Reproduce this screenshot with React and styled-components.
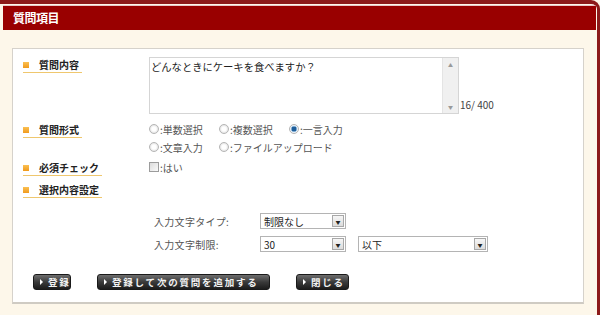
import React from "react";
import styled, { createGlobalStyle } from "styled-components";

const GlobalStyle = createGlobalStyle`
  html, body {
    margin: 0;
    padding: 0;
    background: #fdf7ea;
  }
  body {
    font-family: "Noto Sans CJK JP", "Liberation Sans", sans-serif;
    font-size: 10px;
    color: #333;
  }
`;

const typeOptions = [
  { key: "single", label: ":単数選択" },
  { key: "multi", label: ":複数選択" },
  { key: "line", label: ":一言入力", checked: true },
  { key: "text", label: ":文章入力" },
  { key: "file", label: ":ファイルアップロード" },
];

function App() {
  return (
    <>
      <GlobalStyle />
      <Frame>
        <Header>質問項目</Header>
        <Panel>
          <Row>
            <Label>質問内容</Label>
            <Field>
              <TextBox>
                <TextValue>どんなときにケーキを食べますか？</TextValue>
                <Scroll>
                  <Arrow>▲</Arrow>
                  <Arrow>▼</Arrow>
                </Scroll>
              </TextBox>
              <Counter>16/ 400</Counter>
            </Field>
          </Row>

          <Row $top={8}>
            <Label>質問形式</Label>
            <RadioGrid>
              {typeOptions.map((item) => (
                <Choice key={item.key}>
                  <Radio $checked={item.checked} />
                  {item.label}
                </Choice>
              ))}
            </RadioGrid>
          </Row>

          <Row $top={6}>
            <Label>必須チェック</Label>
            <Choice>
              <Check />
              :はい
            </Choice>
          </Row>

          <Row $top={6}>
            <Label>選択内容設定</Label>
          </Row>

          <Settings>
            <SetRow>
              <SetLabel>入力文字タイプ:</SetLabel>
              <Select $width={86}>
                <span>制限なし</span>
                <SelectBtn>▼</SelectBtn>
              </Select>
            </SetRow>
            <SetRow>
              <SetLabel>入力文字制限:</SetLabel>
              <Select $width={86}>
                <span>30</span>
                <SelectBtn>▼</SelectBtn>
              </Select>
              <Select $width={130}>
                <span>以下</span>
                <SelectBtn>▼</SelectBtn>
              </Select>
            </SetRow>
          </Settings>

          <Buttons>
            <Btn $width={38}>登録</Btn>
            <Btn $width={173}>登録して次の質問を追加する</Btn>
            <Btn $width={53}>閉じる</Btn>
          </Buttons>
        </Panel>
      </Frame>
    </>
  );
}

const Frame = styled.div`
  box-sizing: border-box;
  width: 600px;
  height: 315px;
  border-top: 4px solid #8c1a1a;
  border-right: 3px solid #8c1a1a;
  border-top-right-radius: 9px;
  padding: 1px 1px 0 3px;
  background: #fdf7ea;
  overflow: hidden;
`;

const Header = styled.div`
  height: 24px;
  border-top: 1px solid #e9c9c9;
  background: #990000;
  color: #fff;
  font-weight: bold;
  font-size: 12px;
  line-height: 24px;
  padding-left: 10px;
  letter-spacing: -0.5px;
`;

const Panel = styled.div`
  box-sizing: border-box;
  margin: 18px 0 0 9px;
  width: 572px;
  height: 256px;
  background: #fff;
  border: 1px solid #d6d2cb;
  border-bottom: 2px solid #cfcbc3;
  padding: 8px 0 0 10px;
  display: flex;
  flex-direction: column;
`;

const Row = styled.div`
  display: grid;
  grid-template-columns: 126px 1fr;
  align-items: start;
  margin-top: ${(p) => p.$top || 0}px;
`;

const Label = styled.div`
  justify-self: start;
  display: flex;
  align-items: center;
  gap: 10px;
  height: 15px;
  padding-right: 3px;
  border-bottom: 1px solid #efc76e;
  font-weight: bold;
  font-size: 10px;
  color: #222;
  &::before {
    content: "";
    width: 6px;
    height: 6px;
    background: linear-gradient(#fbc052, #f09a1c);
  }
`;

const Field = styled.div`
  display: flex;
  align-items: flex-end;
`;

const TextBox = styled.div`
  box-sizing: border-box;
  width: 310px;
  height: 57px;
  border: 1px solid #d5d5d5;
  display: flex;
  justify-content: space-between;
`;

const TextValue = styled.div`
  padding: 2px 1px;
  font-size: 10.3px;
  color: #222;
  line-height: 13px;
`;

const Scroll = styled.div`
  width: 15px;
  background: #f0f0f0;
  border-left: 1px solid #e4e4e4;
  display: flex;
  flex-direction: column;
  justify-content: space-between;
  align-items: center;
  padding: 3px 0;
`;

const Arrow = styled.span`
  font-size: 5px;
  color: #999;
`;

const Counter = styled.span`
  margin: 0 0 2px 1px;
  font-size: 10px;
  color: #444;
`;

const RadioGrid = styled.div`
  display: grid;
  grid-template-columns: 70px 70px auto;
  row-gap: 4px;
`;

const Choice = styled.label`
  display: flex;
  align-items: center;
  height: 14px;
  gap: 1px;
  color: #555;
  font-size: 10px;
  white-space: nowrap;
`;

const Radio = styled.span`
  box-sizing: border-box;
  flex-shrink: 0;
  width: 10px;
  height: 10px;
  border-radius: 50%;
  border: 1px solid #b5b5b5;
  background: ${(p) =>
    p.$checked
      ? "radial-gradient(circle, #1f5e9a 0 2.4px, #9cc2e2 2.6px 3.2px, #eef3f8 3.4px)"
      : "radial-gradient(circle, #fff 0 2px, #e6e6e6 4px)"};
`;

const Check = styled.span`
  box-sizing: border-box;
  flex-shrink: 0;
  width: 10px;
  height: 10px;
  border: 1px solid #9c9c9c;
  background: linear-gradient(135deg, #dcdcdc, #fafafa);
`;

const Settings = styled.div`
  margin: 15px 0 0 131px;
  display: flex;
  flex-direction: column;
  gap: 7px;
`;

const SetRow = styled.div`
  display: flex;
  align-items: center;
  gap: 12px;
`;

const SetLabel = styled.span`
  width: 94px;
  font-size: 10px;
  color: #555;
  letter-spacing: 0.3px;
`;

const Select = styled.div`
  box-sizing: border-box;
  width: ${(p) => p.$width}px;
  height: 16px;
  border: 1px solid #b4b4b4;
  display: flex;
  align-items: center;
  justify-content: space-between;
  padding: 0 1px 0 3px;
  font-size: 10px;
  color: #222;
`;

const SelectBtn = styled.span`
  box-sizing: border-box;
  width: 12px;
  height: 12px;
  border: 1px solid #a8a8a8;
  background: linear-gradient(#f6f6f6, #dcdcdc);
  font-size: 5px;
  color: #222;
  display: flex;
  align-items: center;
  justify-content: center;
`;

const Buttons = styled.div`
  margin: 22px 0 0 10px;
  display: flex;
  gap: 26px;
`;

const Btn = styled.div`
  box-sizing: border-box;
  width: ${(p) => p.$width}px;
  height: 16px;
  border: 1px solid #1a1a1a;
  border-radius: 3px;
  background: linear-gradient(#6e6e6e, #3a3a3a 50%, #1c1c1c);
  color: #f2f2f2;
  font-weight: bold;
  font-size: 9.5px;
  letter-spacing: 1.8px;
  display: flex;
  align-items: center;
  padding-left: 6px;
  gap: 5px;
  white-space: nowrap;
  overflow: hidden;
  &::before {
    content: "";
    border-left: 3px solid #fff;
    border-top: 3px solid transparent;
    border-bottom: 3px solid transparent;
  }
`;

export default App;
